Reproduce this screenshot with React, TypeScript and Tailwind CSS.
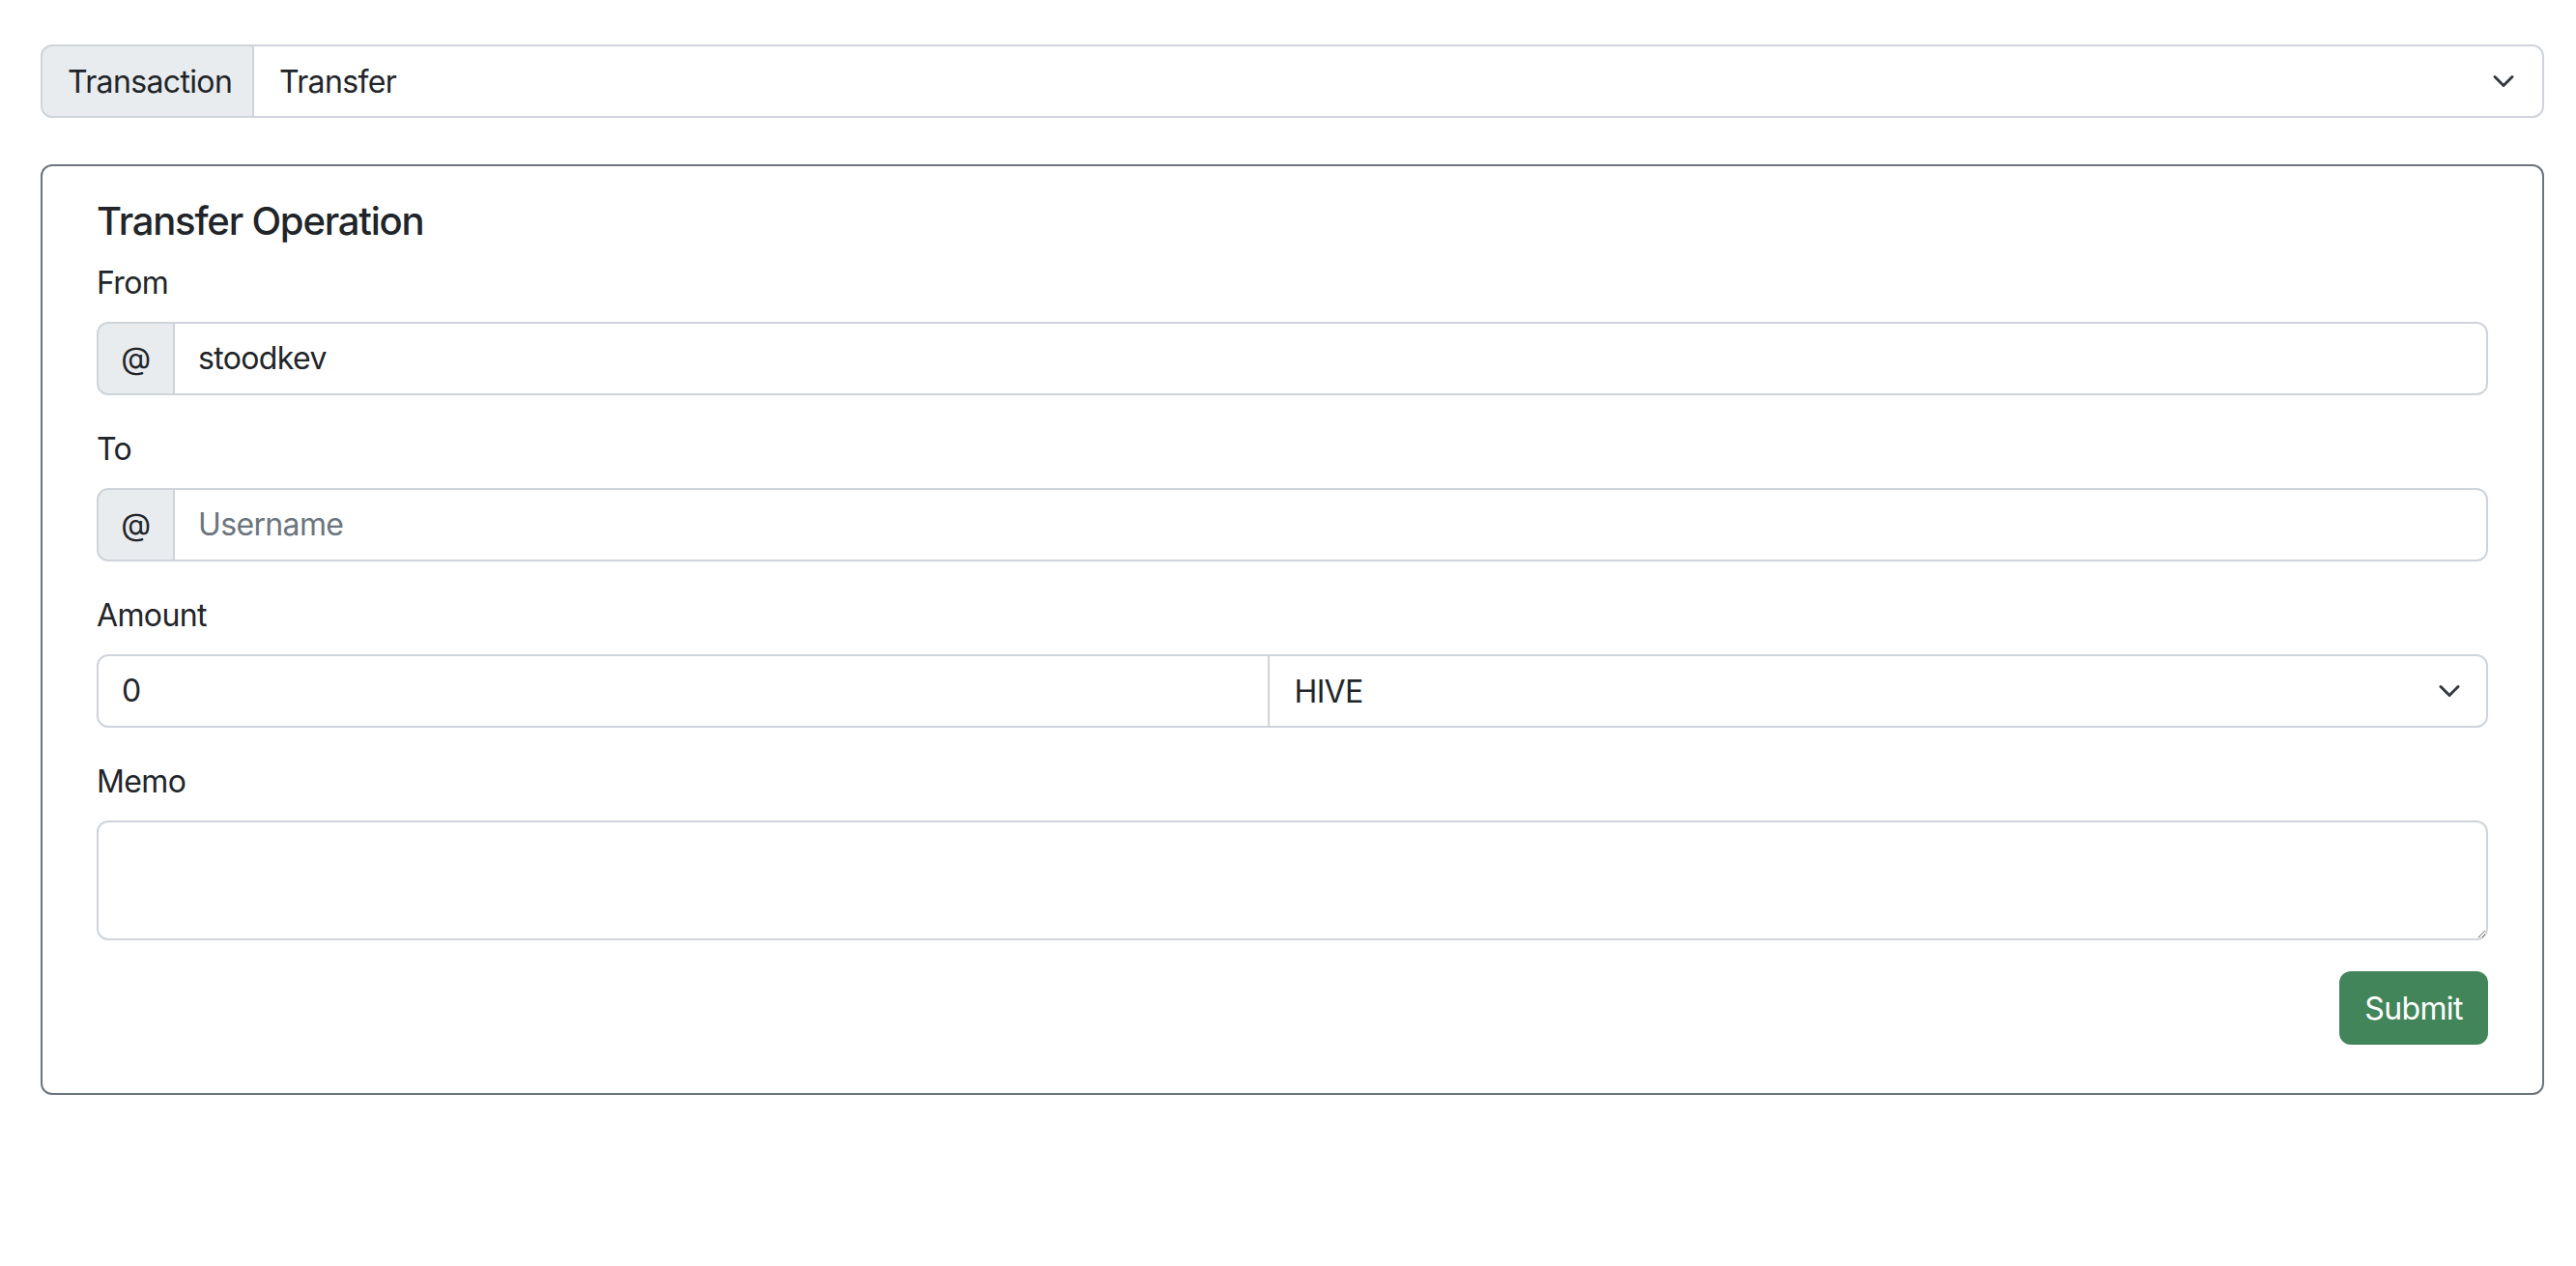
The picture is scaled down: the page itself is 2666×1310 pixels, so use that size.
import React from 'react';

function Chevron() {
  return (
    <svg width="32" height="24" viewBox="0 0 16 16" fill="none" className="shrink-0">
      <path d="m2 5 6 6 6-6" stroke="#343a40" strokeWidth="2" strokeLinecap="round" strokeLinejoin="round" />
    </svg>
  );
}

function AtInput({ value, placeholder }: { value?: string; placeholder?: string }) {
  return (
    <div className="flex h-[76px] w-full">
      <span className="flex w-[81px] shrink-0 items-center justify-center rounded-l-[12px] border-2 border-[#ced4da] bg-[#e9ecef] text-[#212529]">
        @
      </span>
      <input
        defaultValue={value}
        placeholder={placeholder}
        className="-ml-[2px] min-w-0 flex-1 rounded-r-[12px] border-2 border-[#ced4da] bg-white px-[24px] tracking-[-0.02em] text-[#212529] outline-none placeholder:text-[#6c757d]"
      />
    </div>
  );
}

export default function App() {
  return (
    <div className="min-h-screen bg-white pl-[42px] pr-[33px] pt-[46px] text-[32px] leading-[48px] tracking-[-0.02em] text-[#212529] [font-family:Inter,'Noto_Sans',sans-serif]">
      {/* Transaction picker */}
      <div className="flex h-[76px]">
        <span className="flex w-[221px] shrink-0 items-center rounded-l-[12px] border-2 border-[#ced4da] bg-[#e9ecef] px-[26px] pt-[2px]">
          Transaction
        </span>
        <div className="-ml-[2px] flex flex-1 items-center justify-between rounded-r-[12px] border-2 border-[#ced4da] bg-white pl-[26px] pr-[24px]">
          <span className="pt-[2px]">Transfer</span>
          <Chevron />
        </div>
      </div>

      {/* Operation card */}
      <div className="mt-[48px] rounded-[12px] border-2 border-[#6c757d] px-[56px] pb-[50px] pt-[33px]">
        <h5 className="mb-[16px] text-[40px] font-medium leading-[48px] tracking-[-0.03em]">Transfer Operation</h5>

        <div className="mb-[32px]">
          <label className="mb-[16px] block">From</label>
          <AtInput value="stoodkev" />
        </div>

        <div className="mb-[32px]">
          <label className="mb-[16px] block">To</label>
          <AtInput placeholder="Username" />
        </div>

        <div className="mb-[32px]">
          <label className="mb-[16px] block">Amount</label>
          <div className="grid h-[76px] grid-cols-[1214fr_1262fr]">
            <input
              defaultValue="0"
              className="min-w-0 rounded-l-[12px] border-2 border-[#ced4da] bg-white px-[24px] text-[#212529] outline-none"
            />
            <div className="-ml-[2px] flex items-center justify-between rounded-r-[12px] border-2 border-[#ced4da] bg-white pl-[26px] pr-[22px]">
              <span className="pt-[2px]">HIVE</span>
              <Chevron />
            </div>
          </div>
        </div>

        <div className="mb-[32px]">
          <label className="mb-[16px] block">Memo</label>
          <textarea className="block h-[124px] w-full resize-y rounded-[12px] border-2 border-[#ced4da] bg-white px-[24px] py-[12px] outline-none" />
        </div>

        <div className="flex justify-end">
          <button className="h-[76px] w-[154px] rounded-[12px] bg-[#43855a] pt-[2px] text-white">Submit</button>
        </div>
      </div>
    </div>
  );
}
